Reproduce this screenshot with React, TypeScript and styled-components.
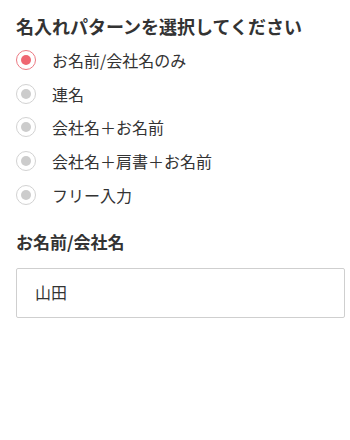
import React, { useState } from 'react';
import styled, { createGlobalStyle } from 'styled-components';

const GlobalStyle = createGlobalStyle`
  body {
    margin: 0;
    background: #fff;
    font-family: "Noto Sans CJK JP", "Noto Sans", sans-serif;
    color: #333;
  }
`;

const Page = styled.div`
  padding: 12px 5px 0 16px;
`;

const Heading = styled.h2<{ $size: number }>`
  margin: 0;
  font-size: ${(p) => p.$size}px;
  line-height: 28px;
  font-weight: 700;
  color: #333;
`;

const Options = styled.div`
  display: flex;
  flex-direction: column;
  margin-top: 3px;
`;

const Option = styled.label`
  display: flex;
  align-items: center;
  height: 33.75px;
  gap: 16px;
  cursor: pointer;
  font-size: 16px;
  color: #333;
`;

const Radio = styled.span<{ $checked: boolean }>`
  width: 20px;
  height: 20px;
  box-sizing: border-box;
  border-radius: 50%;
  border: 1px solid ${(p) => (p.$checked ? '#ec7a83' : '#d2d2d2')};
  display: flex;
  align-items: center;
  justify-content: center;
  flex-shrink: 0;
  &::after {
    content: '';
    width: 10px;
    height: 10px;
    border-radius: 50%;
    background: ${(p) => (p.$checked ? '#ef6772' : '#cccccc')};
  }
`;

const Section = styled.div`
  margin-top: 16px;
`;

const TextInput = styled.input`
  display: block;
  margin-top: 12px;
  width: 100%;
  height: 50px;
  box-sizing: border-box;
  border: 1px solid #cfcfcf;
  border-radius: 2px;
  padding: 0 18px 2px;
  font-family: inherit;
  font-size: 16px;
  color: #333;
  outline: none;
`;

const patterns = [
  'お名前/会社名のみ',
  '連名',
  '会社名＋お名前',
  '会社名＋肩書＋お名前',
  'フリー入力',
];

export default function App() {
  const [selected, setSelected] = useState(0);
  return (
    <Page>
      <GlobalStyle />
      <Heading $size={18}>名入れパターンを選択してください</Heading>
      <Options>
        {patterns.map((label, i) => (
          <Option key={label} onClick={() => setSelected(i)}>
            <Radio $checked={selected === i} />
            {label}
          </Option>
        ))}
      </Options>
      <Section>
        <Heading $size={17}>お名前/会社名</Heading>
        <TextInput defaultValue="山田" />
      </Section>
    </Page>
  );
}
